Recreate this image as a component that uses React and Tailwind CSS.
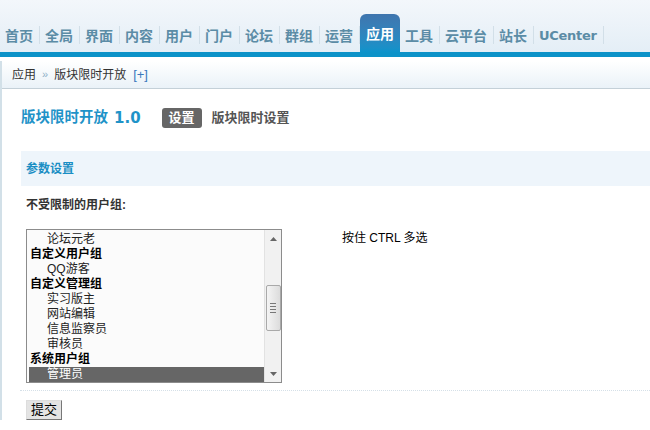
import React from 'react';

const navItems = ['首页', '全局', '界面', '内容', '用户', '门户', '论坛', '群组', '运营', '应用', '工具', '云平台', '站长', 'UCenter'];

const groupRows = [
  { label: '论坛元老', type: 'item' },
  { label: '自定义用户组', type: 'group' },
  { label: 'QQ游客', type: 'item' },
  { label: '自定义管理组', type: 'group' },
  { label: '实习版主', type: 'item' },
  { label: '网站编辑', type: 'item' },
  { label: '信息监察员', type: 'item' },
  { label: '审核员', type: 'item' },
  { label: '系统用户组', type: 'group' },
  { label: '管理员', type: 'item', selected: true },
];

const cjk = "font-['Liberation_Sans','Noto_Sans_CJK_SC',sans-serif]";

const App = () => {
  return (
    <div className={`w-[650px] h-[430px] overflow-hidden bg-white text-[12px] text-[#333] ${cjk}`}>
      {/* top nav */}
      <div className="h-[52px] bg-gradient-to-b from-[#f3f7fb] to-[#e4eef6] flex flex-col">
        <div className="h-[14px]" />
        <div className="flex flex-1 items-stretch">
          {navItems.map((name) => {
            const active = name === '应用';
            const isLatin = name === 'UCenter';
            return (
              <div key={name} className="flex items-center">
                {active ? (
                  <div className="h-full w-[40px] rounded-t-[6px] bg-gradient-to-b from-[#3f75ae] to-[#0b93cb] text-white flex items-end justify-center pb-[7px] text-[14px] font-bold">
                    {name}
                  </div>
                ) : (
                  <div className="h-full flex items-end pb-[7px]">
                    <span
                      className={`pl-[5px] pr-[6px] text-[#5b8ca6] font-bold leading-[18px] ${
                        isLatin ? "text-[13px] font-['DejaVu_Sans',sans-serif] tracking-[-0.3px]" : 'text-[14px]'
                      }`}
                    >
                      {name}
                    </span>
                    <span className="w-px h-[18px] mb-[1px] bg-[#d2dfe8]" />
                  </div>
                )}
              </div>
            );
          })}
        </div>
      </div>
      <div className="h-[5px] bg-[#0c92c8]" />

      <div className="border-l-2 border-[#d2e0e8]">
        {/* breadcrumb */}
        <div className="h-[28px] bg-gradient-to-b from-white to-[#eaf2f8] border-b border-[#c4d0d8] flex items-center pl-[10px] text-[12px] text-[#333] mt-[4px]">
          <span>应用</span>
          <span className="mx-[6px] text-[#8fb1c8] text-[11px]">»</span>
          <span>版块限时开放</span>
          <span className="ml-[7px] text-[#3a78bc] text-[13px]">[+]</span>
        </div>

        {/* title */}
        <div className="flex items-center h-[36px] mt-[11px] pl-[19px]">
          <span className="text-[14.5px] font-bold text-[#1f93c8]">版块限时开放</span>
          <span className="ml-[6px] text-[15px] font-bold text-[#1f93c8] font-['DejaVu_Sans',sans-serif]">1.0</span>
          <span className="ml-[21px] h-[20px] w-[40px] rounded-[3px] bg-[#666] text-white font-bold text-[13px] flex items-center justify-center">设置</span>
          <span className="ml-[10px] text-[13px] font-bold text-[#555]">版块限时设置</span>
        </div>

        {/* section header */}
        <div className="ml-[19px] mt-[15px] h-[35px] bg-[#eef5fb] flex items-center pl-[5px] text-[12px] font-bold text-[#1a8ec4]">
          参数设置
        </div>

        <div className="pl-[24px] mt-[11px] text-[12px] font-bold text-[#333] leading-[16px]">不受限制的用户组:</div>

        <div className="flex mt-[16px] pl-[24px]">
          {/* listbox */}
          <div className="w-[256px] h-[154px] border border-[#8c8c8c] bg-[#fbfbfb] flex">
            <div className="flex-1 pl-[2px] pt-[2px] overflow-hidden">
              {groupRows.map((row) => (
                <div
                  key={row.label}
                  className={`h-[15px] leading-[15px] text-[12px] ${
                    row.type === 'group' ? 'font-bold text-black pl-[1px]' : 'pl-[18px] text-[#222]'
                  } ${row.selected ? 'bg-[#666] text-white' : ''}`}
                >
                  {row.label}
                </div>
              ))}
            </div>
            {/* scrollbar */}
            <div className="w-[17px] border-l border-[#e2e2e2] bg-[#f1f1f1] flex flex-col items-center">
              <div className="h-[17px] flex items-center justify-center">
                <svg width="7" height="4" viewBox="0 0 7 4"><path d="M0 4 L3.5 0 L7 4 Z" fill="#666" /></svg>
              </div>
              <div className="h-[38px]" />
              <div className="w-[15px] h-[46px] rounded-[2px] border border-[#a9a9a9] bg-gradient-to-r from-[#f4f4f4] to-[#dcdcdc] flex flex-col items-center justify-center gap-[2px]">
                <span className="w-[6px] h-px bg-[#777]" />
                <span className="w-[6px] h-px bg-[#777]" />
                <span className="w-[6px] h-px bg-[#777]" />
                <span className="w-[6px] h-px bg-[#777]" />
              </div>
              <div className="flex-1" />
              <div className="h-[17px] flex items-center justify-center">
                <svg width="7" height="4" viewBox="0 0 7 4"><path d="M0 0 L3.5 4 L7 0 Z" fill="#666" /></svg>
              </div>
            </div>
          </div>
          <div className="ml-[60px] mt-[2px] text-[12px] text-black leading-[15px]">按住 CTRL 多选</div>
        </div>

        <div className="ml-[18px] mt-[7px] border-t border-dotted border-[#d5e0e8]" />

        <div className="pl-[24px] mt-[9px]">
          <button className="h-[20px] w-[36px] border border-t-[#ddd] border-l-[#ddd] border-r-[#777] border-b-[#777] bg-[#e4e4e4] text-[13px] text-black leading-[18px]">
            提交
          </button>
        </div>
      </div>
    </div>
  );
};

export default App;
